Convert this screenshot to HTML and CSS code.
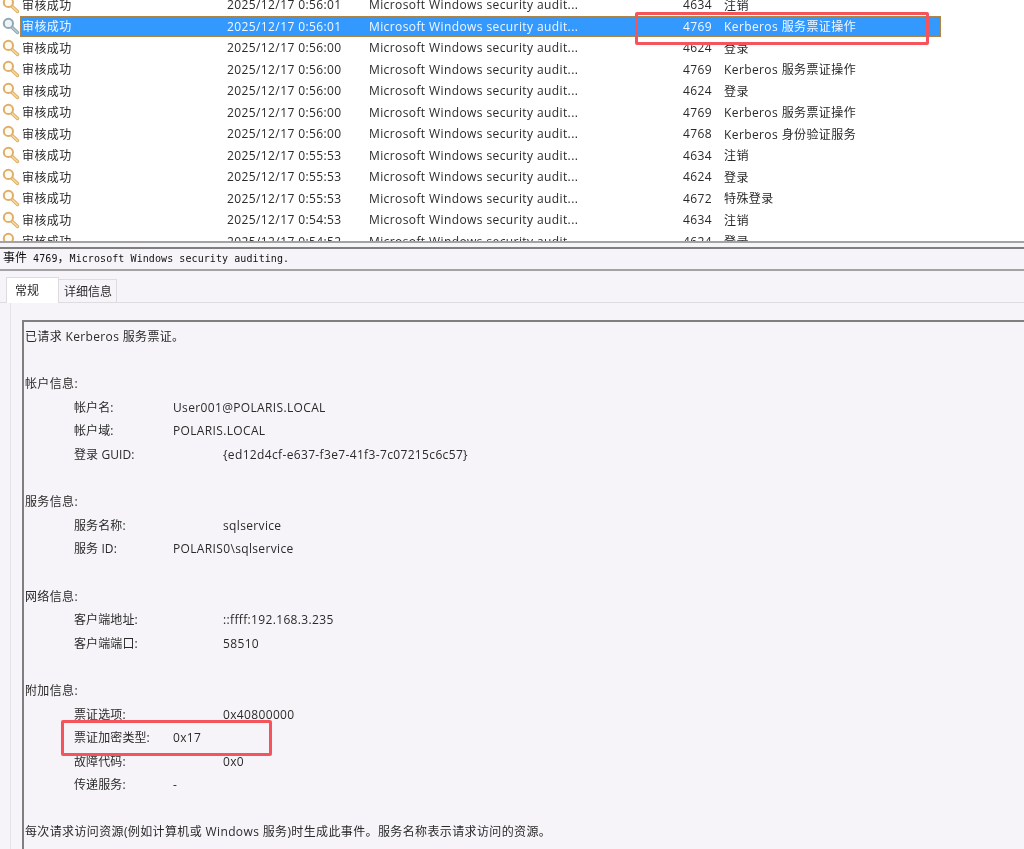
FILE: index.html
```html
<!DOCTYPE html>
<html lang="zh">
<head>
<meta charset="utf-8">
<title>事件 4769</title>
<link rel="stylesheet" href="styles.css">
</head>
<body>
<svg class="defs" width="0" height="0" aria-hidden="true">
  <symbol id="key" viewBox="0 0 18 18">
    <path class="key-edge" d="M8.5 9 15.5 15.5"/>
    <path class="key-core" d="M8.5 9 15.5 15.5"/>
    <circle class="key-ring" cx="6.4" cy="6.4" r="4.6"/>
  </symbol>
</svg>
<div class="app">
  <section class="list">
    <div class="rows">
      <div class="row"><svg class="icon"><use href="#key"/></svg><span class="c-level">审核成功</span><span class="c-date">2025/12/17 0:56:01</span><span class="c-source">Microsoft Windows security audit...</span><span class="c-id">4634</span><span class="c-task">注销</span></div>
      <div class="row selected"><svg class="icon"><use href="#key"/></svg><div class="sel"><span class="c-level">审核成功</span><span class="c-date">2025/12/17 0:56:01</span><span class="c-source">Microsoft Windows security audit...</span><span class="c-id">4769</span><span class="c-task">Kerberos 服务票证操作</span></div></div>
      <div class="row"><svg class="icon"><use href="#key"/></svg><span class="c-level">审核成功</span><span class="c-date">2025/12/17 0:56:00</span><span class="c-source">Microsoft Windows security audit...</span><span class="c-id">4624</span><span class="c-task">登录</span></div>
      <div class="row"><svg class="icon"><use href="#key"/></svg><span class="c-level">审核成功</span><span class="c-date">2025/12/17 0:56:00</span><span class="c-source">Microsoft Windows security audit...</span><span class="c-id">4769</span><span class="c-task">Kerberos 服务票证操作</span></div>
      <div class="row"><svg class="icon"><use href="#key"/></svg><span class="c-level">审核成功</span><span class="c-date">2025/12/17 0:56:00</span><span class="c-source">Microsoft Windows security audit...</span><span class="c-id">4624</span><span class="c-task">登录</span></div>
      <div class="row"><svg class="icon"><use href="#key"/></svg><span class="c-level">审核成功</span><span class="c-date">2025/12/17 0:56:00</span><span class="c-source">Microsoft Windows security audit...</span><span class="c-id">4769</span><span class="c-task">Kerberos 服务票证操作</span></div>
      <div class="row"><svg class="icon"><use href="#key"/></svg><span class="c-level">审核成功</span><span class="c-date">2025/12/17 0:56:00</span><span class="c-source">Microsoft Windows security audit...</span><span class="c-id">4768</span><span class="c-task">Kerberos 身份验证服务</span></div>
      <div class="row"><svg class="icon"><use href="#key"/></svg><span class="c-level">审核成功</span><span class="c-date">2025/12/17 0:55:53</span><span class="c-source">Microsoft Windows security audit...</span><span class="c-id">4634</span><span class="c-task">注销</span></div>
      <div class="row"><svg class="icon"><use href="#key"/></svg><span class="c-level">审核成功</span><span class="c-date">2025/12/17 0:55:53</span><span class="c-source">Microsoft Windows security audit...</span><span class="c-id">4624</span><span class="c-task">登录</span></div>
      <div class="row"><svg class="icon"><use href="#key"/></svg><span class="c-level">审核成功</span><span class="c-date">2025/12/17 0:55:53</span><span class="c-source">Microsoft Windows security audit...</span><span class="c-id">4672</span><span class="c-task">特殊登录</span></div>
      <div class="row"><svg class="icon"><use href="#key"/></svg><span class="c-level">审核成功</span><span class="c-date">2025/12/17 0:54:53</span><span class="c-source">Microsoft Windows security audit...</span><span class="c-id">4634</span><span class="c-task">注销</span></div>
      <div class="row"><svg class="icon"><use href="#key"/></svg><span class="c-level">审核成功</span><span class="c-date">2025/12/17 0:54:52</span><span class="c-source">Microsoft Windows security audit...</span><span class="c-id">4624</span><span class="c-task">登录</span></div>
    </div>
  </section>
  <section class="detail">
    <header class="title"><span class="cjk">事件</span> 4769<span class="cjk">，</span>Microsoft Windows security auditing.</header>
    <nav class="tabs">
      <span class="tab active">常规</span>
      <span class="tab">详细信息</span>
    </nav>
    <div class="panel">
      <div class="message">
        <p class="line">已请求 Kerberos 服务票证。</p>
        <p class="line blank"></p>
        <p class="line">帐户信息:</p>
        <p class="line in"><span class="k">帐户名:</span>User001@POLARIS.LOCAL</p>
        <p class="line in"><span class="k">帐户域:</span>POLARIS.LOCAL</p>
        <p class="line in"><span class="k kw">登录 GUID:</span>{ed12d4cf-e637-f3e7-41f3-7c07215c6c57}</p>
        <p class="line blank"></p>
        <p class="line">服务信息:</p>
        <p class="line in"><span class="k kw">服务名称:</span>sqlservice</p>
        <p class="line in"><span class="k">服务 ID:</span>POLARIS0\sqlservice</p>
        <p class="line blank"></p>
        <p class="line">网络信息:</p>
        <p class="line in"><span class="k kw">客户端地址:</span>::ffff:192.168.3.235</p>
        <p class="line in"><span class="k kw">客户端端口:</span>58510</p>
        <p class="line blank"></p>
        <p class="line">附加信息:</p>
        <p class="line in"><span class="k kw">票证选项:</span>0x40800000</p>
        <p class="line in"><span class="k">票证加密类型:</span>0x17</p>
        <p class="line in"><span class="k kw">故障代码:</span>0x0</p>
        <p class="line in"><span class="k">传递服务:</span>-</p>
        <p class="line blank"></p>
        <p class="line last">每次请求访问资源(例如计算机或 Windows 服务)时生成此事件。服务名称表示请求访问的资源。</p>
      </div>
    </div>
  </section>
  <div class="mark mark-top"></div>
  <div class="mark mark-bottom"></div>
</div>
</body>
</html>
```
FILE: styles.css
```css
* { box-sizing: border-box; }
html, body { margin: 0; padding: 0; }
body {
  background: #fff;
  color: #2a2a2a;
  font-family: "Open Sans", "Noto Sans CJK SC", sans-serif;
  font-size: 12px;
}
.defs { position: absolute; }
.app {
  position: relative;
  width: 1024px;
  height: 849px;
  overflow: hidden;
  display: flex;
  flex-direction: column;
  filter: blur(.3px);
}
.list {
  height: 241px;
  flex: none;
  overflow: hidden;
  background: #fff;
}
.rows { margin-top: -6px; letter-spacing: .4px; }
.row {
  height: 21.5px;
  display: flex;
  align-items: center;
  --key-edge: #dfae68;
  --key-core: #f7dc9c;
  --key-fill: #fffaf0;
}
.icon {
  width: 18px;
  height: 18px;
  margin-left: 2px;
  flex: none;
}
.key-edge { fill: none; stroke: var(--key-edge); stroke-width: 3.4; stroke-linecap: round; }
.key-core { fill: none; stroke: var(--key-core); stroke-width: 1.4; stroke-linecap: round; }
.key-ring { fill: var(--key-fill); stroke: var(--key-edge); stroke-width: 2; }
.row > span, .sel > span { color: #2a2a2a; white-space: nowrap; }
.c-level { margin-left: 2px; width: 205px; flex: none; }
.c-date { width: 142px; flex: none; }
.c-source { width: 314px; flex: none; }
.c-id { width: 41px; flex: none; }
.selected {
  --key-edge: #8fa8b6;
  --key-core: #bccbd4;
  --key-fill: #eef3f5;
}
.sel {
  display: flex;
  align-items: center;
  width: 921px;
  height: 100%;
  background: #3399ff;
  outline: 1px dotted #b5894a;
  outline-offset: -1px;
}
.sel > span { color: #f2f8ff; }
.detail {
  flex: 1;
  min-height: 0;
  display: flex;
  flex-direction: column;
  background: #f6f4f8;
  border-top: 2px solid #a3a3a3;
}
.title {
  margin-top: 4px;
  height: 24px;
  border-top: 2px solid #7f7f7f;
  border-bottom: 2px solid #a3a3a3;
  padding: 0 0 0 3px;
  font-family: "DejaVu Sans Mono", "Noto Sans CJK SC", monospace;
  font-size: 10px;
  line-height: 15px;
  color: #111;
  white-space: nowrap;
  letter-spacing: .08px;
}
.cjk {
  font-family: "Noto Sans CJK SC", sans-serif;
  font-size: 12px;
  letter-spacing: 0;
}
.tabs {
  display: flex;
  align-items: flex-end;
  height: 32px;
  flex: none;
  padding-left: 6px;
  border-bottom: 1px solid #dedcdf;
}
.tab {
  height: 23px;
  padding: 0 4px 0 5px;
  line-height: 24px;
  background: #f6f4f8;
  border: 1px solid #dedcdf;
  border-bottom: none;
  margin-left: -1px;
  color: #2a2a2a;
}
.tab.active {
  height: 26px;
  margin-bottom: -1px;
  width: 53px;
  padding: 0 8px;
  background: #fff;
  margin-left: 0;
  line-height: 25px;
}
.panel {
  flex: 1;
  min-height: 0;
  margin-left: 10px;
  border-left: 1px solid #e4e2e6;
  padding: 17px 0 0 11px;
}
.message {
  height: 100%;
  border-top: 2px solid #7f7f7f;
  border-left: 2px solid #7f7f7f;
  padding: 3px 0 0 1px;
  letter-spacing: .35px;
}
.line {
  margin: 0;
  height: 23.6px;
  line-height: 23.6px;
  white-space: nowrap;
}
.last { letter-spacing: .37px; }
.in { padding-left: 49px; display: flex; }
.k { width: 99px; flex: none; letter-spacing: .1px; }
.kw { width: 149px; }
.mark {
  position: absolute;
  border: 3px solid #f4545c;
  border-radius: 2px;
}
.mark-top { left: 635px; top: 12px; width: 294px; height: 33px; }
.mark-bottom { left: 61px; top: 720px; width: 211px; height: 36px; }
```
